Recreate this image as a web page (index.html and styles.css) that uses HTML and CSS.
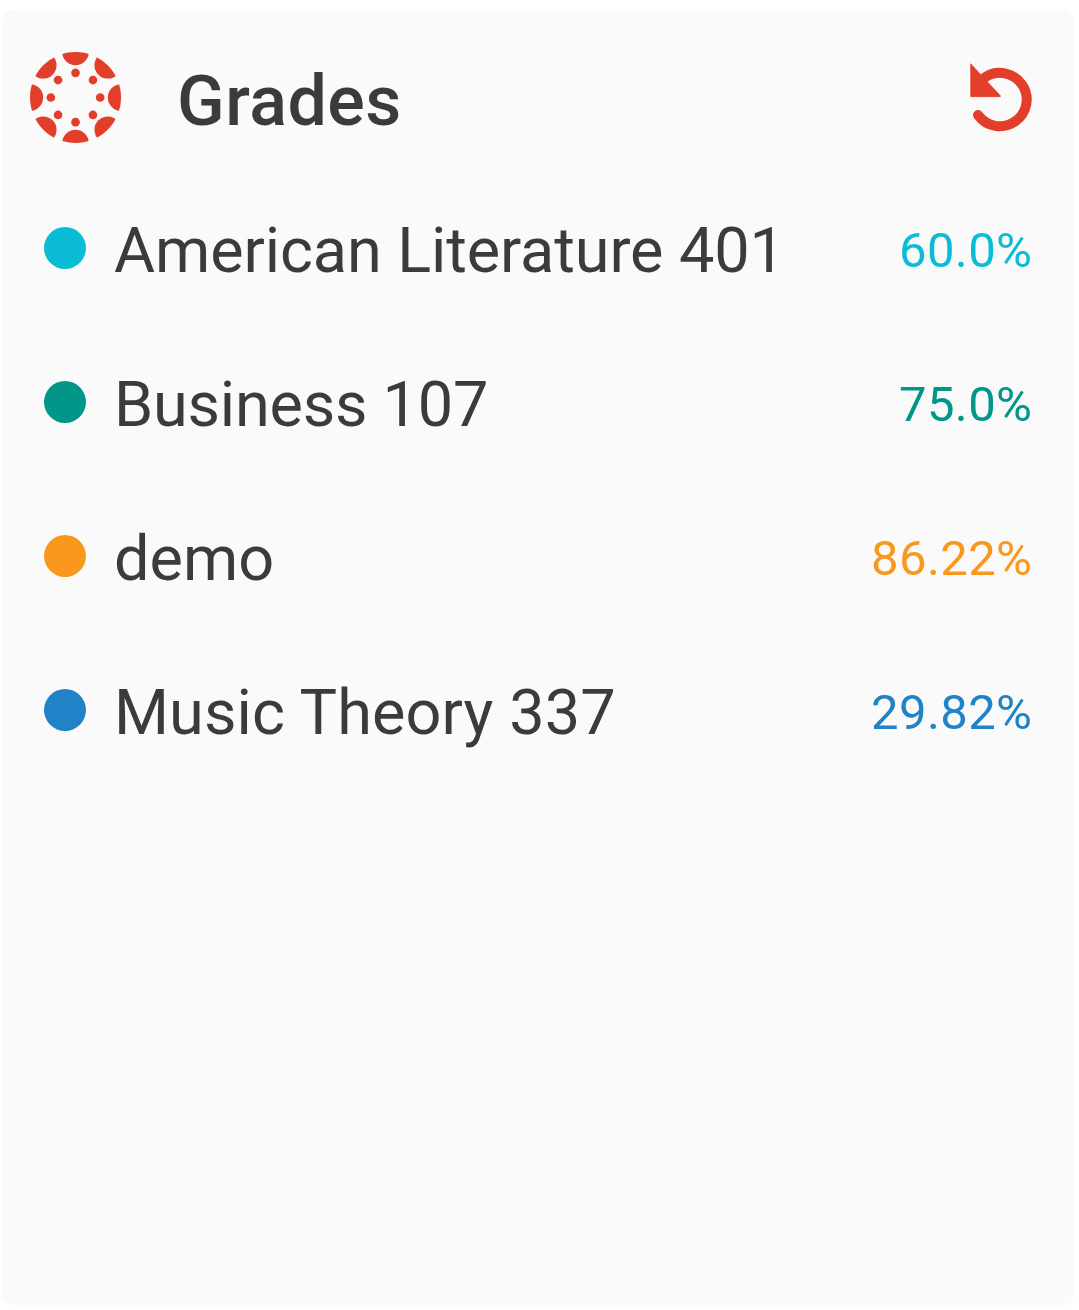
FILE: index.html
```html
<!DOCTYPE html>
<html lang="en">
<head>
<meta charset="utf-8">
<title>Grades</title>
<link rel="stylesheet" href="styles.css">
</head>
<body>
<main class="widget">
  <header class="header">
    <svg class="logo" viewBox="-136.5 -136.5 276 276" aria-hidden="true">
      <defs>
        <clipPath id="disc"><circle r="136.5"/></clipPath>
        <g id="pair"><circle cy="-137" r="40"/><circle cy="-74" r="13"/></g>
      </defs>
      <g clip-path="url(#disc)">
        <use href="#pair"/>
        <use href="#pair" transform="rotate(45)"/>
        <use href="#pair" transform="rotate(90)"/>
        <use href="#pair" transform="rotate(135)"/>
        <use href="#pair" transform="rotate(180)"/>
        <use href="#pair" transform="rotate(225)"/>
        <use href="#pair" transform="rotate(270)"/>
        <use href="#pair" transform="rotate(315)"/>
      </g>
    </svg>
    <h1 class="title">Grades</h1>
    <button class="refresh" aria-label="Refresh">
      <svg class="refresh-icon" viewBox="45 39 189 207">
        <path class="ring" d="M69 195A80.5 80 0 1 0 90 82"/>
        <path class="arrow" d="M47 41L136 137V140H47Z"/>
      </svg>
    </button>
  </header>
  <ul class="courses">
    <li class="course cyan"><span class="dot"></span><span class="name">American Literature 401</span><span class="grade">60.0%</span></li>
    <li class="course teal"><span class="dot"></span><span class="name">Business 107</span><span class="grade">75.0%</span></li>
    <li class="course orange"><span class="dot"></span><span class="name">demo</span><span class="grade">86.22%</span></li>
    <li class="course blue"><span class="dot"></span><span class="name">Music Theory 337</span><span class="grade">29.82%</span></li>
  </ul>
</main>
</body>
</html>
```
FILE: styles.css
```css
* { box-sizing: border-box; }
body {
  margin: 0;
  padding: 10px 6px 5px 3px;
  height: 1310px;
  background: #fff;
  color: #3b3b3b;
  font-family: Roboto, sans-serif;
}
.widget {
  height: 1295px;
  border-radius: 9px;
  background: #fafafa;
}
.header {
  display: flex;
  align-items: center;
  height: 161px;
  padding: 14px 40px 0 27px;
}
.logo {
  width: 92px;
  height: 92px;
  fill: #e23e29;
}
.title {
  flex: 1;
  margin: 7px 0 0 55px;
  font-size: 70px;
  font-weight: 500;
  line-height: 82px;
  letter-spacing: 0.5px;
}
.refresh {
  padding: 0;
  border: 0;
  background: none;
}
.refresh-icon {
  display: block;
  width: 63px;
  height: 69px;
  overflow: visible;
}
.ring {
  fill: none;
  stroke: #e23e29;
  stroke-width: 30;
  stroke-linecap: round;
}
.arrow {
  fill: #e23e29;
  stroke: #e23e29;
  stroke-width: 2;
  stroke-linejoin: round;
}
.courses {
  margin: 0;
  padding: 0;
  list-style: none;
}
.course {
  display: flex;
  align-items: center;
  height: 154px;
  padding: 0 41px;
}
.dot {
  width: 42px;
  height: 42px;
  border-radius: 50%;
  background: var(--accent);
}
.name {
  flex: 1;
  margin: 6px 0 0 28px;
  font-size: 63px;
  line-height: 74px;
  letter-spacing: var(--tracking, 0);
}
.grade {
  margin: 6px -0.4px 0 0;
  color: var(--accent);
  font-size: 49px;
  line-height: 58px;
  letter-spacing: 0.4px;
}
.cyan { --accent: #0abcd6; --tracking: -0.1px; }
.teal { --accent: #009688; --tracking: -0.23px; }
.orange { --accent: #fa981d; }
.blue { --accent: #2083c8; --tracking: 0.1px; }
```
